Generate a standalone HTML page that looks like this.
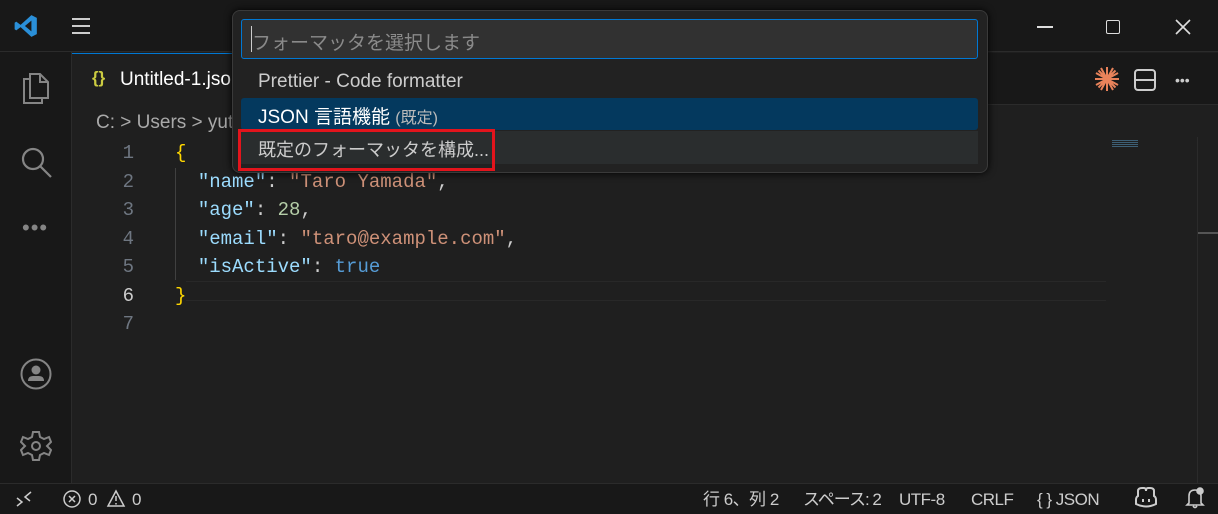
<!DOCTYPE html>
<html><head><meta charset="utf-8"><style>
*{margin:0;padding:0;box-sizing:border-box}
body{width:1218px;height:514px;background:#1f1f1f;overflow:hidden;position:relative;font-family:"Liberation Sans","Noto Sans CJK JP",sans-serif;color:#ccc}
.abs{position:absolute}
.mono{font-family:"Liberation Mono","Noto Sans CJK JP",monospace;font-size:19px}
.ln{position:absolute;left:100px;width:34px;text-align:right;color:#6e7681}
.cl{position:absolute;left:175px;white-space:pre}
.k{color:#9cdcfe}.s{color:#ce9178}.n{color:#b5cea8}.b{color:#569cd6}.y{color:#ffd700}
.st{position:absolute;top:490px;height:20px;line-height:20px;font-size:17px;color:#ccc;white-space:nowrap}
</style></head><body>
<div class="abs" style="left:0;top:0;width:1218px;height:52px;background:#181818;border-bottom:1px solid #2b2b2b"></div>
<svg class="abs" style="left:13px;top:13px" width="26" height="26" viewBox="0 0 24 24"><path d="M17 2 L22 4.5 V19.5 L17 22 L7 13 L3 16 L1.5 15 V9 L3 8 L7 11 L17 2 Z M17 7 L11 12 L17 17 Z" fill="#2a8fd8"/></svg>
<div class="abs" style="left:72px;top:18px;width:18px;height:2px;background:#ccc;box-shadow:0 7px 0 #ccc,0 14px 0 #ccc"></div>
<div class="abs" style="left:1037px;top:26px;width:16px;height:1.5px;background:#ddd"></div>
<div class="abs" style="left:1106px;top:20px;width:14px;height:14px;border:1.5px solid #ddd;border-radius:2px"></div>
<svg class="abs" style="left:1175px;top:19px" width="16" height="16" viewBox="0 0 16 16" stroke="#ddd" stroke-width="1.6"><path d="M1 1L15 15M15 1L1 15"/></svg>
<div class="abs" style="left:0;top:52px;width:72px;height:431px;background:#181818;border-right:1px solid #2b2b2b"></div>
<svg class="abs" style="left:20px;top:70px" width="32" height="36" viewBox="0 0 32 36" fill="none" stroke="#858585" stroke-width="2"><path d="M10 4 H20 L28 12 V28 H10 Z M20 4 V12 H28"/><path d="M10 9 H4 V33 H22 V28"/></svg>
<svg class="abs" style="left:19px;top:145px" width="34" height="34" viewBox="0 0 34 34" fill="none" stroke="#858585" stroke-width="2.2"><circle cx="14" cy="14" r="10"/><path d="M21 21 L32 32"/></svg>
<div class="abs" style="left:22px;top:215px;font-size:22px;color:#858585;letter-spacing:1px">•••</div>
<svg class="abs" style="left:20px;top:358px" width="32" height="32" viewBox="0 0 32 32"><circle cx="16" cy="16" r="14.5" fill="none" stroke="#858585" stroke-width="2"/><circle cx="16" cy="12" r="4.5" fill="#858585"/><path d="M8 23 Q8 18 13 18 H19 Q24 18 24 23 Z" fill="#858585"/></svg>
<svg class="abs" style="left:20px;top:430px" width="32" height="32" viewBox="0 0 32 32" fill="none" stroke="#858585" stroke-width="2"><path d="M13 2 H19 L20 7 L24 9 L29 7 L31 12 L27 16 L31 20 L29 25 L24 23 L20 25 L19 30 H13 L12 25 L8 23 L3 25 L1 20 L5 16 L1 12 L3 7 L8 9 L12 7 Z"/><circle cx="16" cy="16" r="4"/></svg>
<div class="abs" style="left:72px;top:53px;width:1146px;height:52px;background:#181818;border-bottom:1px solid #2b2b2b"></div>
<div class="abs" style="left:72px;top:53px;width:170px;height:52px;background:#1f1f1f;border-top:1px solid #0078d4"></div>
<div class="abs" style="left:92px;top:68px;font-size:17px;color:#cbcb41;font-weight:bold">{}</div>
<div class="abs" style="left:120px;top:69px;font-size:19px;color:#fff">Untitled-1.jso</div>
<svg class="abs" style="left:1094px;top:66px" width="26" height="26" viewBox="0 0 26 26" stroke="#e8825a" stroke-width="2"><path d="M13 1V25M1 13H25M4.5 4.5L21.5 21.5M21.5 4.5L4.5 21.5M7 2L19 24M19 2L7 24M2 7L24 19M2 19L24 7"/></svg>
<div class="abs" style="left:1134px;top:69px;width:22px;height:22px;border:2px solid #ccc;border-radius:4px"></div>
<div class="abs" style="left:1135px;top:79px;width:20px;height:2px;background:#ccc"></div>
<div class="abs" style="left:1175px;top:72px;font-size:14px;color:#ccc">•••</div>
<div class="abs" style="left:96px;top:112px;font-size:19px;color:#a9a9a9;white-space:pre">C: &gt; Users &gt; yut</div>
<div class="abs" style="left:186px;top:281px;width:920px;height:20px;border-top:1px solid #282828;border-bottom:1px solid #282828"></div>
<div class="abs" style="left:175px;top:168px;width:1px;height:112px;background:#404040"></div>
<div class="mono">
<div class="ln" style="top:142px">1</div><div class="ln" style="top:171px">2</div><div class="ln" style="top:199px">3</div><div class="ln" style="top:228px">4</div><div class="ln" style="top:256px">5</div><div class="ln" style="top:285px;color:#ccc">6</div><div class="ln" style="top:313px">7</div>
<div class="cl y" style="top:142px">{</div>
<div class="cl" style="top:171px">  <span class="k">"name"</span>: <span class="s">"Taro Yamada"</span>,</div>
<div class="cl" style="top:199px">  <span class="k">"age"</span>: <span class="n">28</span>,</div>
<div class="cl" style="top:228px">  <span class="k">"email"</span>: <span class="s">"taro@example.com"</span>,</div>
<div class="cl" style="top:256px">  <span class="k">"isActive"</span>: <span class="b">true</span></div>
<div class="cl y" style="top:285px">}</div>
</div>
<div class="abs" style="left:1112px;top:140px;width:26px;height:8px;background:repeating-linear-gradient(#4a7a9a 0 1px,transparent 1px 2px);opacity:.7"></div>
<div class="abs" style="left:1197px;top:137px;width:21px;height:346px;border-left:1px solid #2b2b2b"></div>
<div class="abs" style="left:1198px;top:232px;width:20px;height:2px;background:#555"></div>
<div class="abs" style="left:232px;top:10px;width:756px;height:163px;background:#222;border:1px solid #3a3a3a;border-radius:8px;box-shadow:0 0 8px #000"></div>
<div class="abs" style="left:241px;top:19px;width:737px;height:40px;background:#313131;border:1px solid #0078d4;border-radius:3px"></div>
<div class="abs" style="left:251px;top:26px;width:1px;height:26px;background:#ccc"></div>
<div class="abs" style="left:252px;top:28px;font-size:19px;color:#8a8a8a">フォーマッタを選択します</div>
<div class="abs" style="left:258px;top:71px;font-size:19px;color:#ccc">Prettier - Code formatter</div>
<div class="abs" style="left:241px;top:98px;width:737px;height:32px;background:#04395e;border-radius:3px"></div>
<div class="abs" style="left:258px;top:102px;font-size:19px;color:#fff">JSON 言語機能 <span style="font-size:16px;color:#bbb">(既定)</span></div>
<div class="abs" style="left:241px;top:131px;width:737px;height:33px;background:#2a2d2e"></div>
<div class="abs" style="left:258px;top:136px;font-size:18px;color:#ccc">既定のフォーマッタを構成...</div>
<div class="abs" style="left:238px;top:129px;width:257px;height:42px;border:3px solid #e3141c"></div>
<div class="abs" style="left:0;top:483px;width:1218px;height:31px;background:#181818;border-top:1px solid #2b2b2b"></div>
<svg class="abs" style="left:15px;top:490px" width="18" height="18" viewBox="0 0 18 18" fill="none" stroke="#ccc" stroke-width="1.5"><path d="M2 8L7 12L2 16M16 2L10 7L15 11"/></svg>
<svg class="abs" style="left:62px;top:489px" width="20" height="20" viewBox="0 0 20 20" fill="none" stroke="#ccc" stroke-width="1.5"><circle cx="10" cy="10" r="8"/><path d="M7 7L13 13M13 7L7 13"/></svg>
<div class="st" style="left:88px">0</div>
<svg class="abs" style="left:106px;top:489px" width="20" height="19" viewBox="0 0 20 19" fill="none" stroke="#ccc" stroke-width="1.5"><path d="M10 2L18 17H2Z M10 7V12 M10 14V15.5"/></svg>
<div class="st" style="left:132px">0</div>
<div class="st" style="left:703px;letter-spacing:-0.5px">行 6、列 2</div>
<div class="st" style="left:803px;letter-spacing:-1px">スペース: 2</div>
<div class="st" style="left:899px;letter-spacing:-0.5px">UTF-8</div>
<div class="st" style="left:971px;letter-spacing:-0.5px">CRLF</div>
<div class="st" style="left:1037px;letter-spacing:-0.5px">{ } JSON</div>
<svg class="abs" style="left:1134px;top:487px" width="24" height="22" viewBox="0 0 24 22" fill="none" stroke="#ccc" stroke-width="2"><path d="M4 4Q4 1 8 1H10Q12 1 12 4Q12 1 14 1H16Q20 1 20 4V9Q22 10 22 13V17Q12 22 2 17V13Q2 10 4 9Z"/><path d="M9 12V15M15 12V15"/></svg>
<svg class="abs" style="left:1185px;top:487px" width="20" height="22" viewBox="0 0 20 22" fill="none" stroke="#ccc" stroke-width="1.6"><path d="M4 16V9Q4 3 10 3Q16 3 16 9V16L18 18H2Z M8 19Q10 22 12 19"/><circle cx="15" cy="4" r="3" fill="#ccc"/></svg>
</body></html>
